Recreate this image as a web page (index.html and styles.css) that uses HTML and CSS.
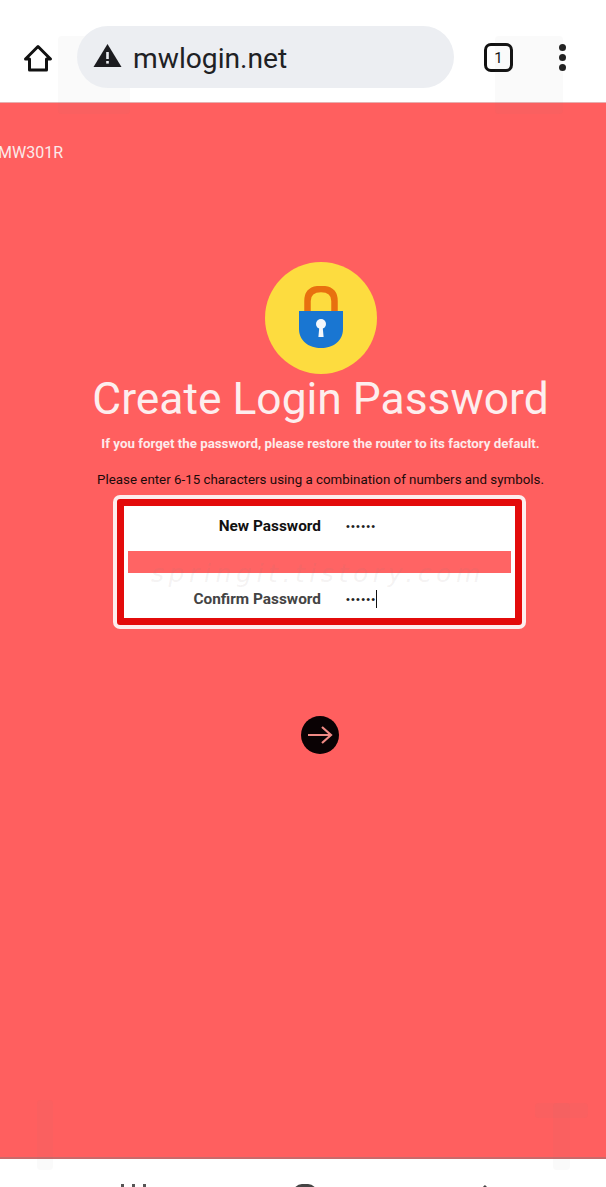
FILE: index.html
```html
<!DOCTYPE html>
<html lang="en">
  <head>
    <meta charset="UTF-8" />
    <meta name="viewport" content="width=device-width, initial-scale=1.0" />
    <title>Create Login Password</title>
    <link rel="stylesheet" href="styles.css">
  </head>
  <body>
    <!-- Browser toolbar -->
    <div class="toolbar">
      <svg class="home-icon" width="30" height="30" viewBox="0 0 30 30">
        <path d="M15 3.5 L27.5 16 H23.5 V27 H6.5 V16 H2.5 Z" fill="none" stroke="#111" stroke-width="3" stroke-linejoin="round" />
      </svg>
      <div class="address">
        <svg class="warn-icon" width="29" height="24" viewBox="0 0 29 24">
          <path d="M14.5 1 L28.5 24 H0.5 Z" fill="#1c1c20" />
          <rect x="13.2" y="9" width="2.6" height="7" fill="#eceef2" />
          <rect x="13.2" y="18" width="2.6" height="2.6" fill="#eceef2" />
        </svg>
        <span class="url">mwlogin.net</span>
      </div>
      <div class="tabs">1</div>
      <div class="menu-dots"><span></span><span></span><span></span></div>
      <div class="ghost ghost-left"></div>
      <div class="ghost ghost-right"></div>
    </div>

    <!-- Router page -->
    <div class="page">
      <p class="model">MW301R</p>

      <div class="logo">
        <svg width="46" height="64" viewBox="0 0 46 64">
          <path d="M9.5 26 V15 C9.5 6 15 3 23 3 C31 3 36.5 6 36.5 15 V26" fill="none" stroke="#e8700f" stroke-width="6.5" />
          <path d="M1 25 H45 V43 C45 55 35 62 23 62 C11 62 1 55 1 43 Z" fill="#1976d2" />
          <circle cx="23" cy="38" r="5" fill="#f4f8fc" />
          <path d="M21.4 40 H24.6 L25.6 51 H20.4 Z" fill="#f4f8fc" />
        </svg>
      </div>

      <h1 class="title">Create Login Password</h1>
      <p class="warning">If you forget the password, please restore the router to its factory default.</p>
      <p class="hint">Please enter 6-15 characters using a combination of numbers and symbols.</p>

      <div class="form-frame">
        <div class="form-box">
          <div class="row">
            <label class="label-new">New Password</label>
            <span class="dots">••••••</span>
          </div>
          <div class="band"></div>
          <div class="row">
            <label class="label-confirm">Confirm Password</label>
            <span class="dots">••••••</span><span class="caret"></span>
          </div>
          <span class="watermark">springit.tistory.com</span>
        </div>
      </div>

      <div class="next">
        <svg width="26" height="20" viewBox="0 0 26 20">
          <path d="M1 10 H24 M15 2 L24 10 L15 18" fill="none" stroke="#f08a85" stroke-width="2.2" />
        </svg>
      </div>

      <div class="ghost ghost-bar"></div>
      <div class="ghost ghost-tee"></div>
    </div>

    <!-- Phone navigation bar, cut off by the screenshot -->
    <div class="navbar">
      <div class="nav-bars"><span></span><span></span><span></span></div>
      <div class="nav-home"></div>
      <svg class="nav-back" width="14" height="20" viewBox="0 0 14 20">
        <path d="M12 2 L3 11 L12 20" fill="none" stroke="#444" stroke-width="3" />
      </svg>
    </div>
  </body>
</html>
```

FILE: styles.css
```css
* {
  margin: 0;
  padding: 0;
  box-sizing: border-box;
}

body {
  width: 606px;
  height: 1187px;
  overflow: hidden;
  display: flex;
  flex-direction: column;
  background: #fff;
  font-family: Roboto, "Liberation Sans", sans-serif;
}

/* Toolbar */
.toolbar {
  position: relative;
  height: 103px;
  flex-shrink: 0;
  display: flex;
  align-items: flex-start;
  padding-top: 26px;
  background: #fff;
  border-bottom: 1px solid #e6b0b0;
}

.home-icon {
  margin: 17px 0 0 23px;
}

.address {
  position: relative;
  z-index: 1;
  width: 377px;
  height: 62px;
  margin-left: 24px;
  display: flex;
  align-items: center;
  padding-left: 16px;
  background: #eceef2;
  border-radius: 31px;
}

.warn-icon {
  margin-top: -4px;
}

.url {
  margin: 2px 0 0 11px;
  font-size: 28.2px;
  color: #202124;
}

.tabs {
  width: 29px;
  height: 29px;
  margin: 17px 0 0 30px;
  display: flex;
  align-items: center;
  justify-content: center;
  border: 3px solid #111;
  border-radius: 7px;
  font-size: 15px;
  color: #111;
}

.menu-dots {
  display: flex;
  flex-direction: column;
  gap: 3px;
  margin: 18px 0 0 46px;
}

.menu-dots span {
  width: 7px;
  height: 7px;
  border-radius: 50%;
  background: #222;
}

/* Faint watermark marks at the corners */
.ghost {
  position: absolute;
  background: rgba(120, 120, 120, 0.04);
  border-radius: 4px;
}

.ghost-left {
  top: 36px;
  left: 58px;
  width: 72px;
  height: 78px;
}

.ghost-right {
  top: 36px;
  left: 495px;
  width: 68px;
  height: 78px;
}

.ghost-bar {
  top: 1100px;
  left: 37px;
  width: 16px;
  height: 70px;
}

.ghost-tee {
  top: 1103px;
  left: 553px;
  width: 17px;
  height: 67px;
}

.ghost-tee::before {
  content: "";
  position: absolute;
  top: 0;
  left: -18px;
  width: 53px;
  height: 15px;
  background: rgba(120, 120, 120, 0.04);
  border-radius: 4px;
}

/* Page */
.page {
  flex: 1;
  display: flex;
  flex-direction: column;
  align-items: center;
  background: #ff5f5f;
  border-bottom: 2px solid #c96a6a;
}

.model {
  align-self: flex-start;
  margin: 40px 0 0 -2px;
  font-size: 16px;
  line-height: 19px;
  color: #fbeaea;
}

.logo {
  width: 112px;
  height: 112px;
  margin: 100px 0 0 35px;
  display: flex;
  align-items: center;
  justify-content: center;
  background: #fddc3f;
  border-radius: 50%;
}

.title {
  margin: 0 0 0 35px;
  font-size: 44.35px;
  font-weight: 400;
  line-height: 50px;
  color: #fdeeee;
  white-space: nowrap;
}

.warning {
  margin: 12px 0 0 35px;
  font-size: 13.3px;
  font-weight: 700;
  line-height: 16px;
  color: #fdeaea;
  white-space: nowrap;
}

.hint {
  margin: 20px 0 0 35px;
  font-size: 13.35px;
  line-height: 16px;
  color: #1c0a0a;
  white-space: nowrap;
}

/* Password box */
.form-frame {
  width: 413px;
  height: 134px;
  margin: 7px 0 0 33px;
  padding: 4px;
  background: #fdeeee;
  border-radius: 7px;
}

.form-box {
  position: relative;
  height: 126px;
  display: flex;
  flex-direction: column;
  justify-content: space-between;
  padding: 7px 4px;
  background: #fff;
  border: 7px solid #e30b0b;
  border-radius: 3px;
}

.row {
  height: 25px;
  display: flex;
  align-items: center;
  position: relative;
}

.row label {
  width: 193px;
  font-size: 15.4px;
  font-weight: 700;
  text-align: right;
}

.label-new {
  color: #111;
}

.label-confirm {
  color: #444;
}

.dots {
  margin-left: 25px;
  font-family: "Liberation Sans", sans-serif;
  font-size: 11px;
  letter-spacing: 1.2px;
  color: #222;
}

.caret {
  width: 1px;
  height: 18px;
  background: #111;
}

.band {
  height: 22px;
  background: #ff6464;
}

.watermark {
  position: absolute;
  top: 53px;
  left: 27px;
  font-family: "DejaVu Sans", sans-serif;
  font-style: italic;
  font-size: 25px;
  letter-spacing: 4.6px;
  color: rgba(150, 130, 130, 0.1);
  white-space: nowrap;
}

/* Next button */
.next {
  width: 38px;
  height: 38px;
  margin: 87px 0 0 33px;
  display: flex;
  align-items: center;
  justify-content: center;
  background: #0a0204;
  border-radius: 50%;
}

/* Navigation bar */
.navbar {
  height: 28px;
  flex-shrink: 0;
  display: flex;
  align-items: flex-start;
  padding-top: 25px;
  overflow: hidden;
  background: #fff;
}

.nav-bars {
  display: flex;
  gap: 8px;
  margin-left: 121px;
}

.nav-bars span {
  width: 3px;
  height: 20px;
  background: #555;
}

.nav-home {
  width: 24px;
  height: 24px;
  margin: 0 0 0 147px;
  border: 3px solid #444;
  border-radius: 9px;
}

.nav-back {
  margin: 0 0 0 157px;
}
```
